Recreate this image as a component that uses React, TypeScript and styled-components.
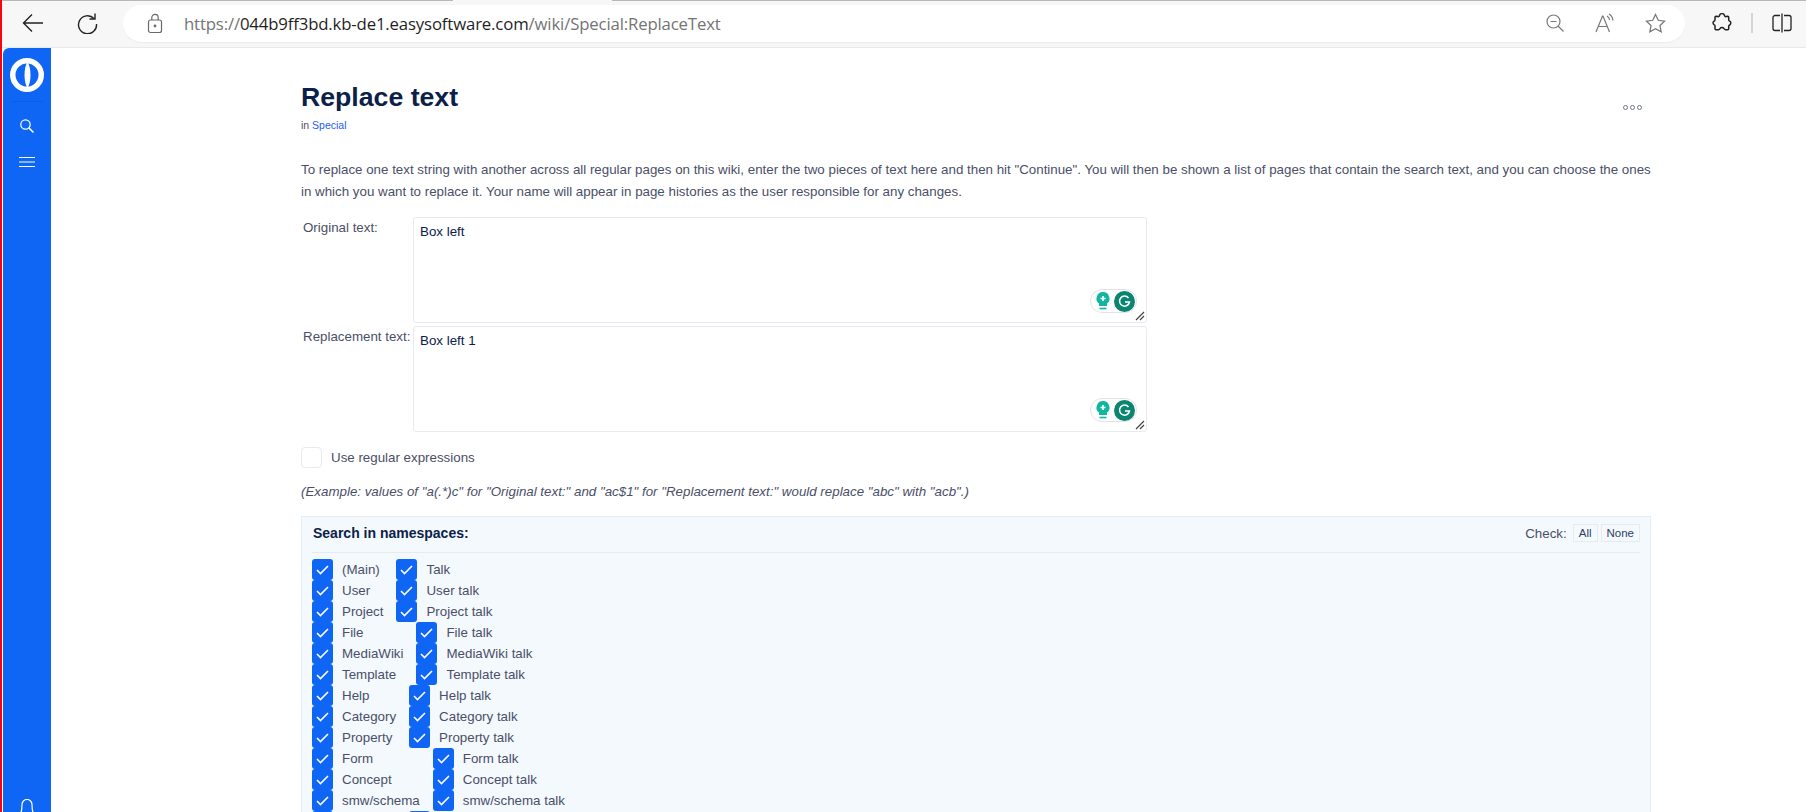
import { FC } from 'react';
import styled, { createGlobalStyle } from 'styled-components';

const COLOR_BLUE = '#0f66f5';
const COLOR_NAVY = '#0b2149';
const COLOR_TEXT = '#4a4f68';
const COLOR_BORDER = '#e7eaef';

const GlobalStyle = createGlobalStyle`
  html, body {
    margin: 0;
    height: 812px;
    overflow: hidden;
    background: #fff;
    font-family: 'Liberation Sans', Arial, sans-serif;
  }
`;

const Screen = styled.div`
  height: 812px;
  display: flex;
  flex-direction: column;
  overflow: hidden;
  border-left: 2px solid #f5060f;
`;

const TabEdge = styled.div`
  flex: none;
  height: 1px;
  display: flex;
  background: #f7f7f7;
`;

const TabEdgeLine = styled.div<{ $width: string }>`
  width: ${({ $width }) => $width};
  background: #b8b8b8;
`;

const TabEdgeGap = styled.div`
  width: 159px;
`;

const Toolbar = styled.header`
  flex: none;
  height: 47px;
  box-sizing: border-box;
  background: #f7f7f7;
  border-bottom: 1px solid #e9e9e9;
  display: flex;
  align-items: center;
  padding: 0 11px 2px 17px;
`;

const NavButton = styled.div`
  width: 28px;
  height: 28px;
  display: flex;
  align-items: center;
  justify-content: center;
  margin-right: 26px;
  &:nth-child(2) {
    margin-right: 22px;
  }
`;

const AddressBar = styled.div`
  flex: none;
  width: 1562px;
  height: 37px;
  box-sizing: border-box;
  background: #fff;
  border-radius: 19px;
  display: flex;
  align-items: center;
  padding: 0 18px 0 24px;
  box-shadow: 0 1px 1px rgba(0, 0, 0, 0.05);
`;

const Url = styled.div`
  margin-left: 21px;
  flex: 1;
  font-size: 16.75px;
  color: #747474;
  white-space: nowrap;
  font-family: 'Open Sans', sans-serif;
  letter-spacing: -0.15px;
  span {
    color: #1f1f1f;
  }
`;

const AddressIcon = styled.div`
  width: 24px;
  height: 24px;
  margin-left: 26px;
  display: flex;
  align-items: center;
  justify-content: center;
`;

const ToolbarEnd = styled.div`
  flex: none;
  margin-left: 27px;
  display: flex;
  align-items: center;
  gap: 19px;
`;

const Separator = styled.div`
  width: 2px;
  height: 20px;
  background: #d4d4d4;
`;

const Body = styled.div`
  flex: 1;
  display: flex;
  min-height: 0;
`;

const Sidebar = styled.nav`
  flex: none;
  width: 48px;
  margin-left: 1px;
  background: ${COLOR_BLUE};
  border-radius: 6px 0 0 0;
  display: flex;
  flex-direction: column;
  align-items: center;
  padding-top: 7px;
  box-sizing: border-box;
`;

const SidebarDivider = styled.div`
  width: 32px;
  height: 1px;
  margin: 6px 0 16px;
  background: rgba(0, 0, 0, 0.08);
`;

const SidebarIcon = styled.div`
  height: 38px;
  display: flex;
  align-items: flex-start;
  justify-content: center;
`;

const SidebarBell = styled.div`
  margin-top: auto;
  height: 13px;
  overflow: hidden;
`;

const Main = styled.main`
  flex: 1;
  min-width: 0;
  padding: 32px 0 0 250px;
  box-sizing: border-box;
  color: ${COLOR_TEXT};
  font-size: 13.33px;
`;

const Column = styled.div`
  width: 1350px;
`;

const TitleRow = styled.div`
  display: flex;
  justify-content: space-between;
`;

const Title = styled.h1`
  margin: 0;
  font-size: 26.67px;
  line-height: 35px;
  font-weight: 700;
  color: ${COLOR_NAVY};
`;

const Breadcrumb = styled.div`
  margin-top: 3px;
  font-size: 10.5px;
  line-height: 14px;
  color: ${COLOR_TEXT};
  a {
    color: #1b61f2;
    text-decoration: none;
  }
`;

const MoreDots = styled.div`
  display: flex;
  gap: 2px;
  margin: 25px 9px 0 0;
  height: 5px;
`;

const Dot = styled.span`
  width: 3px;
  height: 3px;
  border: 1px solid #6f7690;
  border-radius: 50%;
  background: #fff;
`;

const Intro = styled.p`
  margin: 27px 0 0;
  font-size: 13.33px;
  line-height: 21.5px;
`;

const FormTable = styled.div`
  margin-top: 15px;
  display: grid;
  grid-template-columns: 110px 734px;
  row-gap: 3px;
  padding-left: 2px;
`;

const FieldLabel = styled.label`
  font-size: 13.33px;
  line-height: 15px;
  padding-top: 3px;
`;

const TextBox = styled.div`
  position: relative;
  height: 106px;
  box-sizing: border-box;
  border: 1px solid ${COLOR_BORDER};
  border-radius: 3px;
  padding: 6px 6px;
  font-size: 13.33px;
  line-height: 15px;
  color: ${COLOR_NAVY};
`;

const GrammarlyBadge = styled.div`
  position: absolute;
  right: 9px;
  bottom: 9px;
  width: 47px;
  height: 24px;
  box-sizing: border-box;
  border: 1px solid #e0e3e9;
  border-radius: 12px;
  background: #fff;
  display: flex;
  align-items: center;
  justify-content: flex-end;
  gap: 3px;
  padding-right: 1px;
`;

const ResizeGrip = styled.svg`
  position: absolute;
  right: 1px;
  bottom: 1px;
`;

const RegexRow = styled.div`
  margin-top: 15px;
  display: flex;
  align-items: center;
  gap: 9px;
  line-height: 21px;
`;

const EmptyCheck = styled.div`
  width: 21px;
  height: 21px;
  box-sizing: border-box;
  border: 1px solid ${COLOR_BORDER};
  border-radius: 4px;
  background: #fff;
`;

const Example = styled.p`
  margin: 16px 0 0;
  font-style: italic;
  font-size: 13.33px;
  line-height: 16px;
`;

const NamespacePanel = styled.section`
  margin-top: 16px;
  box-sizing: border-box;
  background: #f4f9fe;
  border: 1px solid ${COLOR_BORDER};
  border-bottom: 0;
  padding: 0 10px;
`;

const PanelHeader = styled.div`
  height: 36px;
  box-sizing: border-box;
  border-bottom: 1px solid ${COLOR_BORDER};
  display: flex;
  align-items: center;
  justify-content: space-between;
  padding: 0 0 3px 1px;
`;

const PanelTitle = styled.strong`
  font-size: 14px;
  color: ${COLOR_NAVY};
`;

const CheckTools = styled.div`
  display: flex;
  align-items: center;
  gap: 3px;
  font-size: 13.33px;
`;

const CheckLabel = styled.span`
  margin-right: 3px;
`;

const ToolButton = styled.span`
  height: 18px;
  box-sizing: border-box;
  padding: 0 5px;
  border: 1px solid ${COLOR_BORDER};
  color: #2c3e63;
  font-size: 11.5px;
  line-height: 16px;
`;

const NamespaceList = styled.div`
  padding-top: 6px;
`;

const NamespaceGroup = styled.div<{ $firstColumn?: string }>`
  display: grid;
  grid-template-columns: ${({ $firstColumn }) => $firstColumn ?? 'max-content'} max-content;
  grid-auto-rows: 21px;
  column-gap: 13px;
`;

const NamespaceItem = styled.div`
  display: flex;
  align-items: center;
  gap: 9px;
  font-size: 13.33px;
`;

const Tick = styled.div`
  width: 21px;
  height: 21px;
  flex: none;
  background: ${COLOR_BLUE};
  border-radius: 3px;
  display: flex;
  align-items: center;
  justify-content: center;
`;

const GROUPS = [
  ['(Main)', 'User', 'Project'],
  ['File', 'MediaWiki', 'Template'],
  ['Help', 'Category', 'Property'],
  ['Form', 'Concept', 'smw/schema'],
];

const ITEM_TALK: Record<string, string> = { '(Main)': 'Talk' };

const CheckedBox: FC = () => (
  <Tick>
    <svg width='13' height='11' viewBox='0 0 13 11' fill='none'>
      <path d='M1 6l3.500 3.500L12 2' stroke='#fff' strokeWidth='1.600' />
    </svg>
  </Tick>
);

const App: FC = () => {
  return (
    <>
      <GlobalStyle />
      <Screen>
        <TabEdge>
          <TabEdgeLine $width='451px' />
          <TabEdgeGap />
          <TabEdgeLine $width='1194px' />
        </TabEdge>
        <Toolbar>
          <NavButton>
            <svg width='22' height='22' viewBox='0 0 22 22' fill='none' stroke='#222' strokeWidth='1.400'>
              <path d='M21 11H1.500M10 2.500L1.500 11l8.500 8.500' />
            </svg>
          </NavButton>
          <NavButton>
            <svg width='22' height='22' viewBox='0 0 22 22' fill='none' stroke='#222' strokeWidth='1.400'>
              <path d='M18 6.500A9 9 0 1 0 20.500 12' />
              <path d='M19 1.500v5.500h-5.500' />
            </svg>
          </NavButton>
          <AddressBar>
            <svg width='16' height='21' viewBox='0 0 16 21' fill='none' stroke='#6a6a6a' strokeWidth='1.200'>
              <rect x='1.500' y='7' width='13' height='12.500' rx='2' />
              <path d='M4.800 7V4.600a3.200 3.200 0 0 1 6.400 0V7' />
              <circle cx='8' cy='13' r='0.800' fill='#6a6a6a' />
            </svg>
            <Url>
              https://<span>044b9ff3bd.kb-de1.easysoftware.com</span>/wiki/Special:ReplaceText
            </Url>
            <AddressIcon>
              <svg width='18' height='18' viewBox='0 0 18 18' fill='none' stroke='#777' strokeWidth='1.200'>
                <circle cx='7.500' cy='7.500' r='6.500' />
                <path d='M4.500 7.500h6M12 12l5.500 5.500' />
              </svg>
            </AddressIcon>
            <AddressIcon>
              <svg width='20' height='20' viewBox='0 0 20 20' fill='none' stroke='#777' strokeWidth='1.200'>
                <path d='M1 19L7.500 3h.5l6.500 16M3.200 13.500h9' />
                <path d='M12 3c1.500.8 2.500 2.200 2.500 4M14 1c2.200 1.300 3.800 3.300 3.800 6.500' />
              </svg>
            </AddressIcon>
            <AddressIcon>
              <svg width='21' height='21' viewBox='0 0 22 22' fill='none' stroke='#777' strokeWidth='1.300'>
                <path d='M11 1.500l2.900 6.100 6.600.9-4.800 4.600 1.200 6.600-5.900-3.200-5.900 3.200 1.200-6.600L1.500 8.500l6.600-.9z' />
              </svg>
            </AddressIcon>
          </AddressBar>
          <ToolbarEnd>
            <svg width='20' height='20' viewBox='0 0 20 20' fill='none' stroke='#222' strokeWidth='1.500'>
              <path d='M7.500 2.500a2.600 2.600 0 0 1 5 0c.2.900.8 1.300 1.700 1.100l1.500-.3c.6 0 1 .4 1 1v2.500c0 .8.400 1.100 1 1.400a2.200 2.200 0 0 1 0 3.800c-.6.300-1 .7-1 1.400v2.300c0 .6-.4 1-1 1h-2.200c-.8 0-1.100-.5-1.500-1.100a2.400 2.400 0 0 0-4 0c-.4.600-.8 1.100-1.500 1.100H4c-.6 0-1-.4-1-1v-2.700c0-.8-.3-1.100-1-1.400a2 2 0 0 1 0-3.400c.7-.3 1-.7 1-1.400V4.300c0-.6.400-1 1-1l1.800.3c.900.2 1.500-.2 1.700-1.100z' />
            </svg>
            <Separator />
            <svg width='20' height='20' viewBox='0 0 20 20' fill='none' stroke='#222' strokeWidth='1.300'>
              <path d='M8 2.500H3a2 2 0 0 0-2 2v11a2 2 0 0 0 2 2h5M12 2.500h5a2 2 0 0 1 2 2v11a2 2 0 0 1-2 2h-5M10 .5v19' />
            </svg>
          </ToolbarEnd>
        </Toolbar>
        <Body>
          <Sidebar>
            <svg width='34' height='40' viewBox='0 0 34 40' fill='none'>
              <circle cx='17' cy='20' r='14.250' stroke='#fff' strokeWidth='5.500' />
              <path d='M17.500 7c4 6 4 20 0 26-4-6-4-20 0-26z' fill='#fff' />
            </svg>
            <SidebarDivider />
            <SidebarIcon>
              <svg width='16' height='16' viewBox='0 0 16 16' fill='none' stroke='#fff' strokeWidth='1.200'>
                <circle cx='6.500' cy='6.500' r='4.700' />
                <path d='M10 10l4.500 4.500' strokeWidth='1.700' />
              </svg>
            </SidebarIcon>
            <SidebarIcon>
              <svg width='16' height='12' viewBox='0 0 16 12' fill='none' stroke='#fff' strokeWidth='1.200'>
                <path d='M0 1.500h16M0 6h16M0 10.500h16' />
              </svg>
            </SidebarIcon>
            <SidebarBell>
              <svg width='16' height='20' viewBox='0 0 16 20' fill='none' stroke='#fff' strokeWidth='1.200'>
                <path d='M1 15c2-2 2-5 2-9.500a5 5 0 0 1 10 0c0 4.500 0 7.500 2 9.500z' />
              </svg>
            </SidebarBell>
          </Sidebar>
          <Main>
            <Column>
              <TitleRow>
                <div>
                  <Title>Replace text</Title>
                  <Breadcrumb>
                    in <a href='#special'>Special</a>
                  </Breadcrumb>
                </div>
                <MoreDots>
                  <Dot />
                  <Dot />
                  <Dot />
                </MoreDots>
              </TitleRow>
              <Intro>
                To replace one text string with another across all regular pages on this wiki, enter the two pieces of
                text here and then hit "Continue". You will then be shown a list of pages that contain the search text,
                and you can choose the ones in which you want to replace it. Your name will appear in page histories as
                the user responsible for any changes.
              </Intro>
              <FormTable>
                {[
                  ['Original text:', 'Box left'],
                  ['Replacement text:', 'Box left 1'],
                ].map(([label, value]) => (
                  <FieldRow key={label} label={label} value={value} />
                ))}
              </FormTable>
              <RegexRow>
                <EmptyCheck />
                Use regular expressions
              </RegexRow>
              <Example>
                (Example: values of "a(.*)c" for "Original text:" and "ac$1" for "Replacement text:" would replace "abc"
                with "acb".)
              </Example>
              <NamespacePanel>
                <PanelHeader>
                  <PanelTitle>Search in namespaces:</PanelTitle>
                  <CheckTools>
                    <CheckLabel>Check:</CheckLabel>
                    <ToolButton>All</ToolButton>
                    <ToolButton>None</ToolButton>
                  </CheckTools>
                </PanelHeader>
                <NamespaceList>
                  {GROUPS.map((group) => (
                    <NamespaceGroup key={group[0]}>
                      {group.map((name) => (
                        <NamespacePair key={name} name={name} />
                      ))}
                    </NamespaceGroup>
                  ))}
                  {/* next row only peeks in at the bottom edge of the window */}
                  <NamespaceGroup $firstColumn='84px'>
                    <CheckedBox />
                    <CheckedBox />
                  </NamespaceGroup>
                </NamespaceList>
              </NamespacePanel>
            </Column>
          </Main>
        </Body>
      </Screen>
    </>
  );
};

const FieldRow: FC<{ label: string; value: string }> = ({ label, value }) => (
  <>
    <FieldLabel>{label}</FieldLabel>
    <TextBox>
      {value}
      <GrammarlyBadge>
        <svg width='16' height='20' viewBox='0 0 16 20'>
          <path d='M8 1a6.500 6.500 0 0 0-4 11.600V15h8v-2.400A6.500 6.500 0 0 0 8 1z' fill='#11b5a0' />
          <path d='M8 5v5M5.500 7.500h5' stroke='#fff' strokeWidth='1.600' />
          <path d='M4.500 17.500h7' stroke='#11b5a0' strokeWidth='1.600' />
        </svg>
        <svg width='21' height='21' viewBox='0 0 21 21' fill='none'>
          <circle cx='10.500' cy='10.500' r='10.500' fill='#0b8470' />
          <path d='M14.500 7a5 5 0 1 0 1 4h-4.500' stroke='#fff' strokeWidth='1.500' />
        </svg>
      </GrammarlyBadge>
      <ResizeGrip width='10' height='10' viewBox='0 0 10 10' stroke='#444' strokeWidth='1.200'>
        <path d='M1 9l8-8M5 9l4-4' />
      </ResizeGrip>
    </TextBox>
  </>
);

const NamespacePair: FC<{ name: string }> = ({ name }) => (
  <>
    <NamespaceItem>
      <CheckedBox />
      {name}
    </NamespaceItem>
    <NamespaceItem>
      <CheckedBox />
      {ITEM_TALK[name] ?? `${name} talk`}
    </NamespaceItem>
  </>
);

export default App;
